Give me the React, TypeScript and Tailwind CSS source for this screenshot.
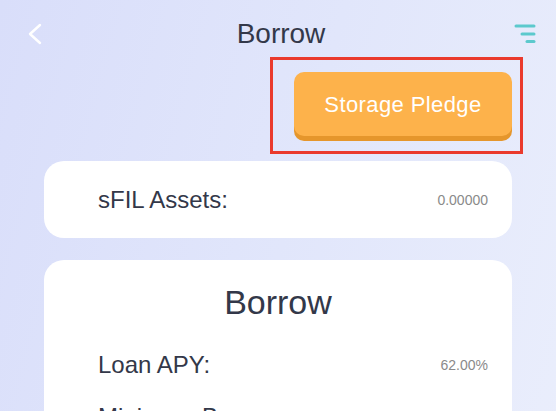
import React from "react";

interface Row {
  label: string;
  value: string;
}

const borrowRows: Row[] = [
  { label: "Loan APY:", value: "62.00%" },
  { label: "Minimum Borrow:", value: "0.00000" },
  { label: "Maximum Borrow:", value: "0.00000" },
];

const App: React.FC = () => {
  return (
    <div
      className="min-h-screen w-full bg-[linear-gradient(105deg,#d9defa_0%,#e1e6fb_50%,#eaeefc_100%)] text-[#333849]"
      style={{ fontFamily: '"Liberation Sans", Arial, sans-serif' }}
    >
      {/* Header */}
      <div className="grid h-[57px] grid-cols-[1fr_auto_1fr] items-center px-[20px] pt-[10px]">
        <button className="flex h-[24px] w-[24px] items-center justify-start pl-[8px]">
          <svg width="14" height="22" viewBox="0 0 14 22" fill="none">
            <polyline
              points="12,2 2,11 12,20"
              stroke="#ffffff"
              strokeWidth="2.4"
              strokeLinecap="round"
              strokeLinejoin="round"
            />
          </svg>
        </button>
        <h1 className="ml-[6px] text-[28px] leading-none">Borrow</h1>
        <div className="flex justify-end">
          <svg width="22" height="20" viewBox="0 0 22 20" fill="none">
            <line x1="2" y1="2" x2="20" y2="2" stroke="#5cc9cd" strokeWidth="3" strokeLinecap="round" />
            <line x1="8" y1="10" x2="20" y2="10" stroke="#5cc9cd" strokeWidth="3" strokeLinecap="round" />
            <line x1="13" y1="17.5" x2="20" y2="17.5" stroke="#5cc9cd" strokeWidth="3" strokeLinecap="round" />
          </svg>
        </div>
      </div>

      {/* Storage Pledge */}
      <div className="flex justify-end pr-[33px]">
        <div className="border-[3px] border-[#ea3a2d] pb-[15px] pl-[21px] pr-[8px] pt-[12px]">
          <button className="flex h-[64px] w-[218px] items-center justify-center rounded-[10px] bg-[#fdb24b] text-[22px] tracking-[0.4px] text-white shadow-[0_5px_0_#e5962c]">
            Storage Pledge
          </button>
        </div>
      </div>

      {/* sFIL Assets */}
      <div className="mx-[44px] mt-[7px] flex h-[77px] items-center justify-between rounded-[20px] bg-white pl-[54px] pr-[24px]">
        <span className="text-[24px] leading-none">sFIL Assets:</span>
        <span className="text-[14px] leading-none text-[#8a8a8a]">0.00000</span>
      </div>

      {/* Borrow card */}
      <div className="mx-[44px] mt-[22px] rounded-[20px] bg-white pb-[30px] pt-[25px]">
        <h2 className="text-center text-[34px] leading-none">Borrow</h2>
        <div className="mt-[34px] flex flex-col gap-[28px] pl-[54px] pr-[24px]">
          {borrowRows.map((row) => (
            <div key={row.label} className="flex items-center justify-between">
              <span className="text-[24px] leading-none">{row.label}</span>
              <span className="text-[14px] leading-none text-[#8a8a8a]">{row.value}</span>
            </div>
          ))}
        </div>
      </div>
    </div>
  );
};

export default App;
